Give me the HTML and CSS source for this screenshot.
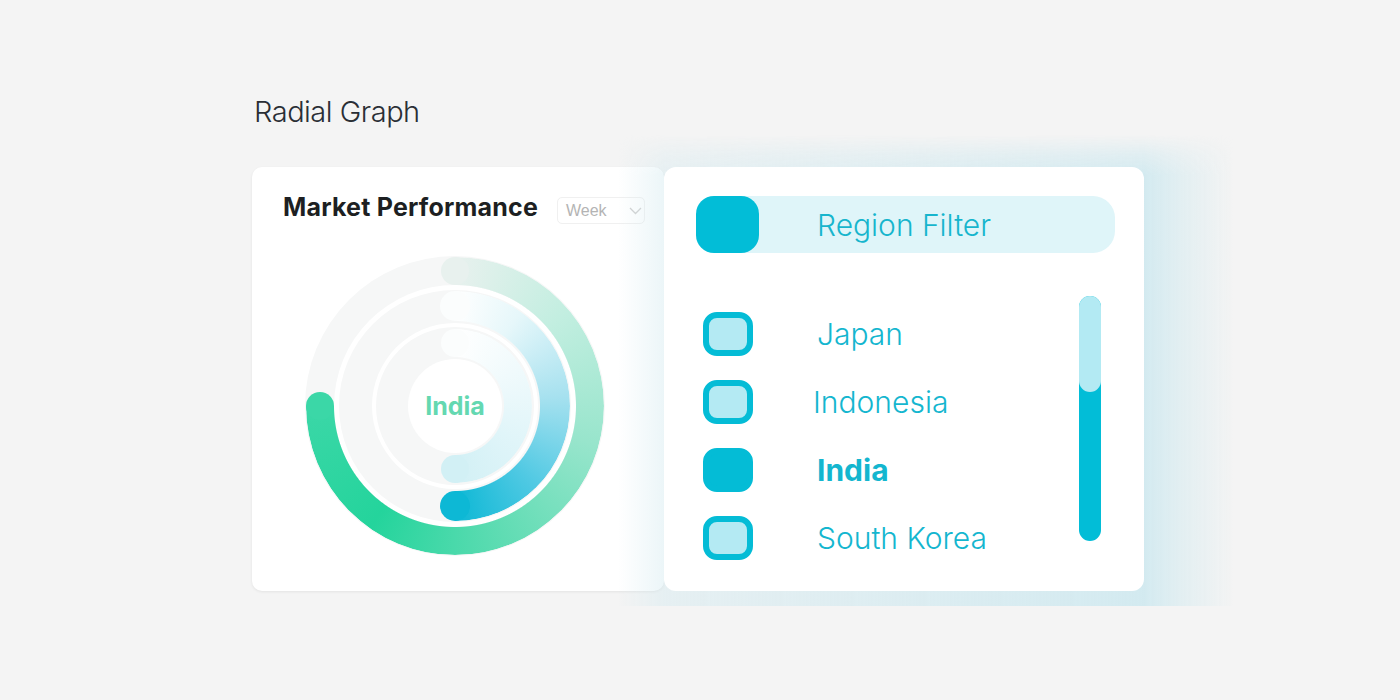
FILE: index.html
```html
<!DOCTYPE html>
<html lang="en">
  <head>
    <meta charset="utf-8" />
    <meta name="viewport" content="width=device-width,initial-scale=1" />
    <title>Radial Graph</title>
    <link rel="stylesheet" href="styles.css">
  </head>
  <body>
    <div class="page">
      <h1 class="page-title">Radial Graph</h1>
      <div class="cards">
        <!-- market performance -->
        <div class="card card-chart">
          <div class="chart-head">
            <div class="chart-title">Market Performance</div>
            <div class="select">
              <span>Week</span>
              <svg width="13" height="8" viewBox="0 0 13 8">
                <polyline points="1,1 6.5,6.5 12,1" fill="none" stroke="#cfcfcf" stroke-width="1.3" />
              </svg>
            </div>
          </div>
          <div class="donut">
            <div class="ring track-outer"></div>
            <div class="ring track-gap-a"></div>
            <div class="ring track-mid"></div>
            <div class="ring track-gap-b"></div>
            <div class="ring track-inner"></div>
            <div class="ring hole"></div>

            <div class="ring arc arc-outer"></div>
            <div class="cap cap-outer-start"></div>
            <div class="cap cap-outer-end"></div>

            <div class="ring arc arc-mid"></div>
            <div class="cap cap-mid-start"></div>
            <div class="cap cap-mid-end"></div>

            <div class="ring arc arc-inner"></div>
            <div class="cap cap-inner-start"></div>
            <div class="cap cap-inner-end"></div>

            <div class="donut-label">India</div>
          </div>
        </div>

        <!-- region filter -->
        <div class="filter-wrap">
          <div class="card card-filter">
            <div class="filter-head">
              <div class="filter-square"></div>
              <div class="filter-title">Region Filter</div>
            </div>
            <div class="filter-body">
              <div class="region-list">
                <div class="region">
                  <div class="check"></div>
                  <div class="region-name">Japan</div>
                </div>
                <div class="region">
                  <div class="check"></div>
                  <div class="region-name region-name-shift">Indonesia</div>
                </div>
                <div class="region region-active">
                  <div class="check"></div>
                  <div class="region-name">India</div>
                </div>
                <div class="region">
                  <div class="check"></div>
                  <div class="region-name">South Korea</div>
                </div>
              </div>
              <div class="scroll">
                <div class="scroll-thumb"></div>
              </div>
            </div>
          </div>
        </div>
      </div>
    </div>
  </body>
</html>
```

FILE: styles.css
```css
html {
  height: 100%;
}

body {
  margin: 0;
  height: 100%;
  background: #f4f4f4;
  font-family: Inter, "Noto Sans", sans-serif;
}

.page {
  padding: 94px 0 0 252px;
}

.page-title {
  margin: 0 0 38px 2px;
  font-size: 29px;
  line-height: 35px;
  font-weight: 300;
  letter-spacing: -0.5px;
  color: #2a2e35;
}

.cards {
  display: flex;
}

.card {
  background: #fff;
  height: 424px;
  box-sizing: border-box;
}

/* chart card */
.card-chart {
  width: 412px;
  padding: 25px 19px 0 31px;
  border-radius: 10px;
  box-shadow: 0 1px 3px rgba(0, 0, 0, 0.07);
}

.chart-head {
  display: flex;
  align-items: flex-start;
  justify-content: space-between;
}

.chart-title {
  font-size: 25px;
  line-height: 30px;
  font-weight: 700;
  letter-spacing: 0.2px;
  color: #1d1f22;
}

.select {
  margin-top: 5px;
  width: 88px;
  height: 27px;
  box-sizing: border-box;
  border: 1px solid #f0f0f0;
  border-radius: 5px;
  padding: 0 2px 0 8px;
  display: flex;
  align-items: center;
  justify-content: space-between;
  font-family: "Liberation Sans", Arial, sans-serif;
  font-size: 16px;
  color: #b4b4b4;
}

.donut {
  position: relative;
  width: 300px;
  height: 300px;
  margin: 32px 0 0 22px;
}

.ring {
  position: absolute;
  border-radius: 50%;
}

.track-outer {
  inset: 0;
  background: #f6f7f7;
}

.track-gap-a {
  inset: 29px;
  background: #fff;
}

.track-mid {
  inset: 34px;
  background: #f6f7f7;
}

.track-gap-b {
  inset: 67px;
  background: #fff;
}

.track-inner {
  inset: 71px;
  background: #f6f7f7;
}

.hole {
  inset: 103px;
  background: #fff;
}

.arc-outer {
  inset: 1px;
  background: conic-gradient(#e8f1ee 0deg, #c2eee0 50deg, #98e5cc 105deg, #5fdcb3 160deg, #24d49c 215deg, #3bd7a7 270deg, transparent 270deg);
  -webkit-mask: radial-gradient(circle closest-side, transparent calc(100% - 28.5px), #000 calc(100% - 27.5px));
  mask: radial-gradient(circle closest-side, transparent calc(100% - 28.5px), #000 calc(100% - 27.5px));
}

.arc-mid {
  inset: 35px;
  background: conic-gradient(#ffffff 0deg, #e6f7fa 35deg, #a6e1ef 85deg, #50c9e3 135deg, #0db8d5 180deg, transparent 180deg);
  -webkit-mask: radial-gradient(circle closest-side, transparent calc(100% - 30.5px), #000 calc(100% - 29.5px));
  mask: radial-gradient(circle closest-side, transparent calc(100% - 30.5px), #000 calc(100% - 29.5px));
}

.arc-inner {
  inset: 73px;
  background: conic-gradient(#ffffff 0deg, #f0fafc 60deg, #e0f5f9 120deg, #d2f0f5 180deg, transparent 180deg);
  -webkit-mask: radial-gradient(circle closest-side, transparent calc(100% - 28.5px), #000 calc(100% - 27.5px));
  mask: radial-gradient(circle closest-side, transparent calc(100% - 28.5px), #000 calc(100% - 27.5px));
}

.cap {
  position: absolute;
  border-radius: 50%;
}

.cap-outer-start {
  left: 136px;
  top: 1px;
  width: 28px;
  height: 28px;
  background: #e8f1ee;
}

.cap-outer-end {
  left: 1px;
  top: 136px;
  width: 28px;
  height: 28px;
  background: #3bd7a7;
}

.cap-mid-start {
  left: 135px;
  top: 35px;
  width: 30px;
  height: 30px;
  background: #fbfdfd;
}

.cap-mid-end {
  left: 135px;
  top: 235px;
  width: 30px;
  height: 30px;
  background: #0db8d5;
}

.cap-inner-start {
  left: 136px;
  top: 73px;
  width: 28px;
  height: 28px;
  background: #fbfdfd;
}

.cap-inner-end {
  left: 136px;
  top: 199px;
  width: 28px;
  height: 28px;
  background: #d2f0f5;
}

.donut-label {
  position: absolute;
  inset: 0;
  display: flex;
  align-items: center;
  justify-content: center;
  font-size: 25px;
  font-weight: 700;
  color: #64d8b1;
}

/* filter card */
.filter-wrap {
  position: relative;
}

/* soft cyan glow behind the filter card */
.filter-wrap::before {
  content: "";
  position: absolute;
  left: -46px;
  right: -90px;
  top: -32px;
  bottom: -15px;
  background: linear-gradient(90deg, rgba(212, 234, 240, 0) 0, rgba(212, 234, 240, 0.45) 46px, #d3eaf0 526px, rgba(214, 235, 240, 0.55) 566px, rgba(230, 240, 242, 0) 616px);
  -webkit-mask: linear-gradient(180deg, transparent 0, rgba(0, 0, 0, 0.6) 20px, #000 40px);
  mask: linear-gradient(180deg, transparent 0, rgba(0, 0, 0, 0.6) 20px, #000 40px);
}

.card-filter {
  position: relative;
  z-index: 1;
  width: 480px;
  padding: 29px 29px 0 32px;
  border-radius: 12px;
}

.filter-head {
  display: flex;
  align-items: center;
  height: 57px;
  border-radius: 22px;
  background: #dff5f9;
}

.filter-square {
  width: 63px;
  height: 57px;
  border-radius: 18px;
  background: #02bdd7;
}

.filter-title {
  margin-left: 58px;
  font-size: 30px;
  font-weight: 300;
  color: #17b5cd;
}

.filter-body {
  display: flex;
  justify-content: space-between;
  margin-top: 43px;
}

.region-list {
  padding: 16px 0 0 7px;
  display: flex;
  flex-direction: column;
  gap: 24px;
}

.region {
  display: flex;
  align-items: center;
  height: 44px;
}

.check {
  width: 50px;
  height: 44px;
  box-sizing: border-box;
  border: 6px solid #04bcd6;
  border-radius: 14px;
  background: #b4eaf3;
}

.region-active .check {
  background: #04bcd6;
}

.region-name {
  margin-left: 64px;
  font-size: 30px;
  font-weight: 300;
  color: #14b6cf;
}

.region-name-shift {
  margin-left: 60px;
}

.region-active .region-name {
  font-weight: 700;
}

.scroll {
  width: 22px;
  height: 245px;
  margin-right: 14px;
  border-radius: 11px;
  background: #02bdd7;
}

.scroll-thumb {
  height: 96px;
  border-radius: 11px;
  background: #b3eaf3;
}
```
